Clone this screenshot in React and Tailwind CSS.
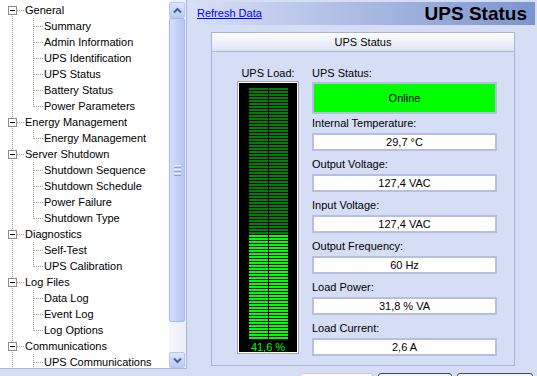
import React from "react";

const tree = [
  { label: "General", children: ["Summary", "Admin Information", "UPS Identification", "UPS Status", "Battery Status", "Power Parameters"] },
  { label: "Energy Management", children: ["Energy Management"] },
  { label: "Server Shutdown", children: ["Shutdown Sequence", "Shutdown Schedule", "Power Failure", "Shutdown Type"] },
  { label: "Diagnostics", children: ["Self-Test", "UPS Calibration"] },
  { label: "Log Files", children: ["Data Log", "Event Log", "Log Options"] },
  { label: "Communications", children: ["UPS Communications"] },
];

const LINE = "#a0a0a0";

function TopRow({ label, first }) {
  return (
    <div className="flex h-[16px] items-center">
      <svg width="25" height="16" className="shrink-0">
        <line x1="12.5" y1={first ? 12 : 0} x2="12.5" y2="16" stroke={LINE} strokeDasharray="1 1" />
        <line x1="17" y1="8.5" x2="24" y2="8.5" stroke={LINE} strokeDasharray="1 1" />
        <rect x="8.5" y="4.5" width="8" height="8" fill="#fff" stroke="#8c8c8c" />
        <line x1="10" y1="8.5" x2="15" y2="8.5" stroke="#000" />
      </svg>
      <span className="whitespace-nowrap">{label}</span>
    </div>
  );
}

function ChildRow({ label, last }) {
  return (
    <div className="flex h-[16px] items-center">
      <svg width="44" height="16" className="shrink-0">
        <line x1="12.5" y1="0" x2="12.5" y2="16" stroke={LINE} strokeDasharray="1 1" />
        <line x1="33.5" y1="0" x2="33.5" y2={last ? 9 : 16} stroke={LINE} strokeDasharray="1 1" />
        <line x1="34" y1="8.5" x2="43" y2="8.5" stroke={LINE} strokeDasharray="1 1" />
      </svg>
      <span className="whitespace-nowrap">{label}</span>
    </div>
  );
}

function Chevron({ up }) {
  return (
    <svg width="9" height="7" viewBox="0 0 9 7">
      {up ? (
        <path d="M1 5.5 L4.5 2 L8 5.5" fill="none" stroke="#4d6185" strokeWidth="2" />
      ) : (
        <path d="M1 1.5 L4.5 5 L8 1.5" fill="none" stroke="#4d6185" strokeWidth="2" />
      )}
    </svg>
  );
}

function Field({ label, value }) {
  return (
    <div className="flex flex-col">
      <div className="h-[14px] leading-[14px]">{label}</div>
      <div className="mt-[3px] flex h-[18px] items-center justify-center border-2 border-[#b6bfe0] bg-white">
        {value}
      </div>
    </div>
  );
}

export default function App() {
  const rows = Array.from({ length: 84 }, (_, i) => i);
  const lit = 35;
  return (
    <div
      className="flex h-[376px] w-[537px] overflow-hidden bg-[#d6def5] text-[11px] text-black"
      style={{ fontFamily: '"Liberation Sans", Arial, sans-serif' }}
    >
      {/* Left tree panel */}
      <div className="flex h-[369px] w-[187px] shrink-0 border-r border-b border-[#a9b6d8] bg-white">
        <div className="flex-1 overflow-hidden pt-[2px]">
          {tree.map((g, gi) => (
            <div key={gi}>
              <TopRow label={g.label} first={gi === 0} />
              {g.children.map((c, ci) => (
                <ChildRow key={ci} label={c} last={ci === g.children.length - 1 && gi !== tree.length - 1} />
              ))}
            </div>
          ))}
        </div>
        <div className="flex w-[17px] flex-col bg-[#eef1fb] pt-[2px] pr-[1px]">
          <div className="flex h-[16px] shrink-0 items-center justify-center rounded-[2px] border border-[#b7c8f0] bg-gradient-to-b from-[#dbe5fd] to-[#b9cbf5]">
            <Chevron up />
          </div>
          <div className="flex h-[304px] shrink-0 items-center justify-center rounded-[2px] border border-[#a7b9e8] bg-gradient-to-r from-[#d3dffc] to-[#b4c6f2]">
            <div className="flex flex-col gap-[1px]">
              <div className="h-[1px] w-[7px] bg-[#eef2fe]" />
              <div className="h-[1px] w-[7px] bg-[#8fa3d6]" />
              <div className="h-[1px] w-[7px] bg-[#eef2fe]" />
              <div className="h-[1px] w-[7px] bg-[#8fa3d6]" />
              <div className="h-[1px] w-[7px] bg-[#eef2fe]" />
              <div className="h-[1px] w-[7px] bg-[#8fa3d6]" />
            </div>
          </div>
          <div className="flex-1 bg-gradient-to-r from-[#f5f7fd] to-[#e9eefb]" />
          <div className="flex h-[16px] shrink-0 items-center justify-center rounded-[2px] border border-[#b7c8f0] bg-gradient-to-b from-[#dbe5fd] to-[#b9cbf5]">
            <Chevron />
          </div>
        </div>
      </div>

      {/* Right content */}
      <div className="flex h-[376px] flex-1 flex-col overflow-hidden pt-[2px] pl-[3px] pr-[2px]">
        <div className="flex h-[23px] shrink-0 items-center justify-between bg-gradient-to-r from-[#d9e0f6] to-[#7c94ce] pl-[7px] pr-[8px]">
          <span className="text-[#0000ff] underline">Refresh Data</span>
          <span className="text-[19px] font-bold leading-none">UPS Status</span>
        </div>

        <div className="ml-[21px] mt-[7px] flex h-[334px] w-[304px] shrink-0 flex-col border border-[#aab3d8]">
          <div className="flex h-[19px] shrink-0 items-center justify-center border-b border-[#b1bad8] bg-gradient-to-b from-white to-[#dde3f4]">
            UPS Status
          </div>
          <div className="flex pt-[14px]">
            <div className="ml-[25px] flex w-[62px] flex-col items-center">
              <div className="h-[14px] leading-[14px]">UPS Load:</div>
              <div className="mt-[1px] h-[273px] w-[62px] border border-[#a8a8a8] bg-white p-[1px]">
                <div className="flex h-full flex-col bg-black pt-[5px] pl-[10px]">
                  {rows.map((i) => (
                    <div key={i} className="mb-[1px] flex h-[2px] shrink-0 gap-[1px]">
                      <div className={i >= rows.length - lit ? "w-[19px] bg-[#00ff00]" : "w-[19px] bg-[#008000]"} />
                      <div className={i >= rows.length - lit ? "w-[19px] bg-[#00ff00]" : "w-[19px] bg-[#008000]"} />
                    </div>
                  ))}
                  <div className="-ml-[10px] mt-[1px] text-center leading-[12px] text-[#00ff00]">41,6 %</div>
                </div>
              </div>
            </div>
            <div className="ml-[13px] flex w-[185px] flex-col">
              <div className="h-[14px] leading-[14px]">UPS Status:</div>
              <div className="mt-[2px] flex h-[32px] items-center justify-center border-2 border-[#b6bfe0] bg-[#00ff00]">
                Online
              </div>
              <div className="mt-[2px] flex flex-col gap-[6px]">
                <Field label="Internal Temperature:" value="29,7 °C" />
                <Field label="Output Voltage:" value="127,4 VAC" />
                <Field label="Input Voltage:" value="127,4 VAC" />
                <Field label="Output Frequency:" value="60 Hz" />
                <Field label="Load Power:" value="31,8 % VA" />
                <Field label="Load Current:" value="2,6 A" />
              </div>
            </div>
          </div>
        </div>

        <div className="ml-[110px] mt-[7px] flex shrink-0 gap-[5px]">
          <div className="h-[12px] w-[73px] shrink-0 rounded-t-[3px] border border-[#c4cad8] bg-white" />
          <div className="h-[12px] w-[74px] shrink-0 rounded-t-[3px] border border-[#3b4a6b] bg-[#f6f6f2]" />
          <div className="h-[12px] w-[76px] shrink-0 rounded-t-[3px] border border-[#3b4a6b] bg-[#f6f6f2]" />
        </div>
      </div>
    </div>
  );
}
